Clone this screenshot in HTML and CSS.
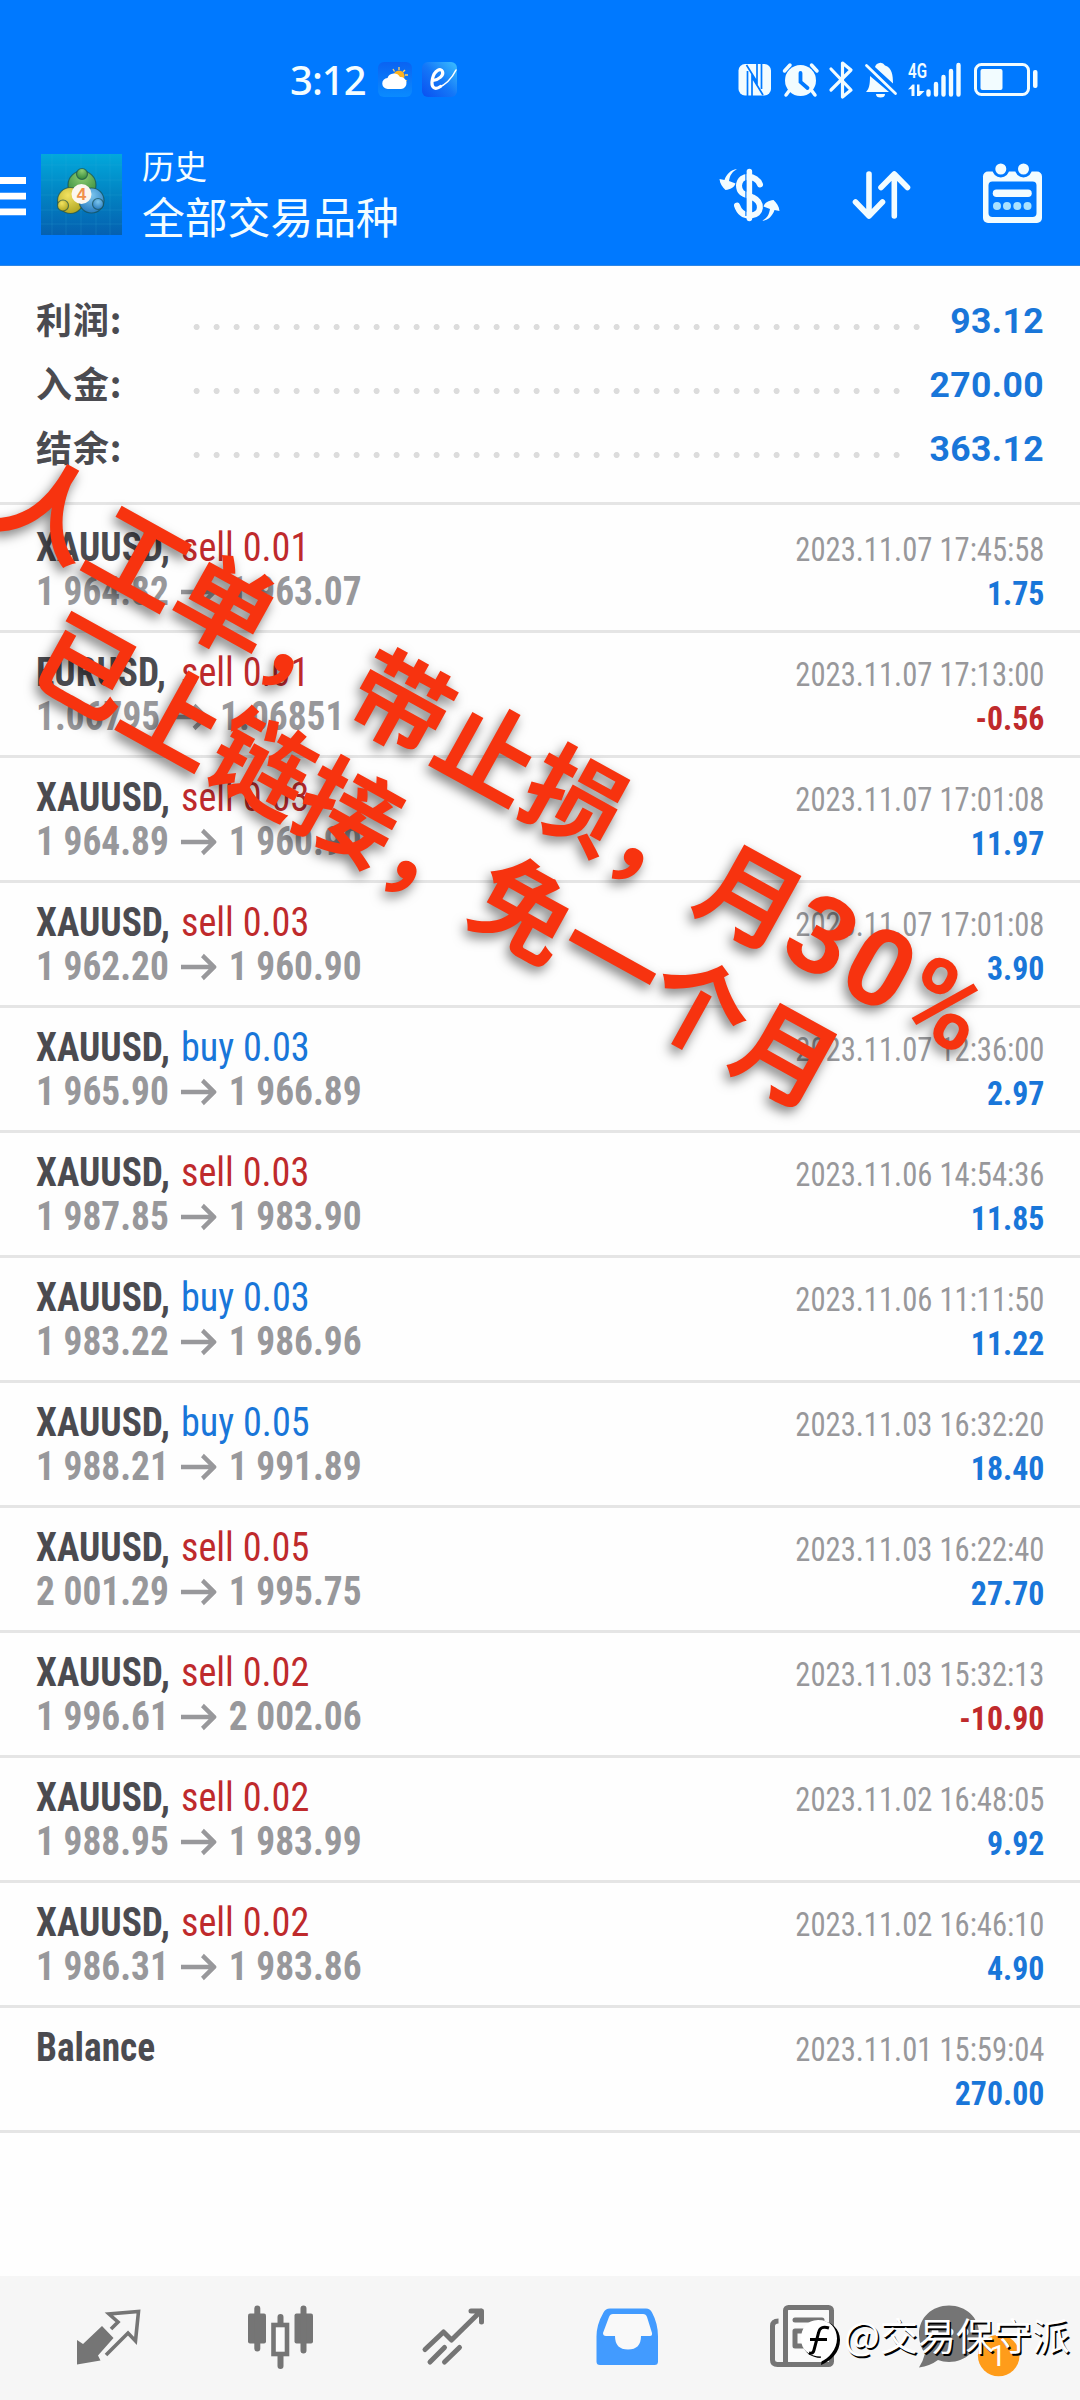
FILE: index.html
```html
<!DOCTYPE html>
<html lang="zh-CN">
<head>
<meta charset="utf-8">
<title>历史</title>
<link rel="stylesheet" href="styles.css">
</head>
<body>
<div class="screen">
  <header class="top">
    <div class="status">
      <span class="clock">3:12</span>
      <svg class="apps" viewBox="376 60 84 40" width="84" height="40">
        <defs>
          <linearGradient id="sky" x1="0" y1="0" x2="0" y2="1"><stop offset="0" stop-color="#0a63f2"/><stop offset="1" stop-color="#0a8bff"/></linearGradient>
          <linearGradient id="app" x1="1" y1="0" x2="0" y2="1"><stop offset="0" stop-color="#3cc0ff"/><stop offset=".5" stop-color="#1478f8"/><stop offset="1" stop-color="#0a50f0"/></linearGradient>
        </defs>
        <rect x="378" y="62" width="34" height="35" rx="6" fill="url(#sky)"/>
        <g stroke="#ffd262" stroke-width="1.3"><path d="M399 67v3M405 70l-2 2M408 75h-3M407 81l-3-1M393 69l1.500 2.500"/></g>
        <circle cx="399" cy="76" r="5.500" fill="#ffb21e"/>
        <path d="M388 89a5.500 5.500 0 0 1-.5-11 7 7 0 0 1 12.500-1 6 6 0 0 1 1 12z" fill="#fff"/>
        <rect x="422" y="62" width="35" height="35" rx="6" fill="url(#app)"/>
        <path d="M433 80.500c6-1 11-5 9.500-9s-8-1.500-10 7c-2 9 2 12 8 8" fill="none" stroke="#fff" stroke-width="3.200" stroke-linecap="round"/>
        <path d="M438 88c7-3 14-10 18-18" fill="none" stroke="#fff" stroke-width="1.600" stroke-linecap="round"/>
      </svg>
      <svg class="signals" viewBox="736 60 304 40" width="304" height="40" fill="#f2fcff">
        <rect x="738.500" y="64" width="32.500" height="31.500" rx="6.500"/>
        <path d="M747.500 97V71M752 97V77l11 18M761.500 63v26M757 63v19L746.500 65" stroke="#0079ff" stroke-width="1.700" fill="none"/>
        <circle cx="800.500" cy="80.500" r="15.500"/>
        <path d="M784.500 71l5.500-6M817 71l-5.500-6M789 91l-3 4M812 91l3 4" stroke="#f2fcff" stroke-width="3.500" stroke-linecap="round"/>
        <path d="M800.500 73v9l7 6" fill="none" stroke="#0079ff" stroke-width="3.800" stroke-linecap="round"/>
        <path d="M831 69l20 21-8.500 7V63l8.500 7-20 20" fill="none" stroke="#f2fcff" stroke-width="3.200" stroke-linejoin="round" stroke-linecap="round"/>
        <path d="M870 76l19 16h-23c3-3 4-7 4-16zM875 67a5.500 5.500 0 0 1 10-1.500c7 2 8 10 8 18z"/>
        <path d="M866.500 65.500l29 28" stroke="#f2fcff" stroke-width="2.800" stroke-linecap="round"/>
        <path d="M876 94h9a4.500 3.500 0 0 1-9 0z"/>
        <text x="908" y="78" textLength="19" lengthAdjust="spacingAndGlyphs" class="net">4G</text>
        <path d="M908 89.500l4.500-5h2V96h-3V89zM917 84.500h2.500V91h5l-5 5H917z"/>
        <path d="M928.500 91.500v3M936 84v10.500M943.500 77v17.500M951 71v23.500M958.500 65v29.500" stroke="#f2fcff" stroke-width="4.400" stroke-linecap="round"/>
        <rect x="975.500" y="64.500" width="53" height="30" rx="6" fill="none" stroke="#f2fcff" stroke-width="3"/>
        <rect x="980.500" y="69" width="22" height="21" rx="2"/>
        <rect x="1033" y="70" width="4.500" height="18" rx="2"/>
      </svg>
    </div>
    <div class="bar">
      <svg class="menu" viewBox="0 150 26 90" width="26" height="90"><path d="M0 180.500h26M0 196.200h26M0 211.800h26" stroke="#fff" stroke-width="6.800"/></svg>
      <svg class="logo" viewBox="41 154 81 81" width="81" height="81">
        <defs>
          <linearGradient id="lg" x1="0" y1="0" x2="0" y2="1"><stop offset="0" stop-color="#02a8dc"/><stop offset=".5" stop-color="#0283c2"/><stop offset="1" stop-color="#0560b0"/></linearGradient>
          <radialGradient id="gn" cx=".5" cy=".2" r=".9"><stop offset="0" stop-color="#8fce72"/><stop offset="1" stop-color="#237d33"/></radialGradient>
          <radialGradient id="yl" cx=".4" cy=".3" r=".8"><stop offset="0" stop-color="#f2e260"/><stop offset="1" stop-color="#a9a01c"/></radialGradient>
          <radialGradient id="bl" cx=".5" cy=".3" r=".8"><stop offset="0" stop-color="#7cc6ee"/><stop offset="1" stop-color="#1a6fb8"/></radialGradient>
        </defs>
        <rect x="41" y="154" width="81" height="81" fill="url(#lg)"/>
        <path d="M52 154v81M66 154v81M81 154v81M96 154v81M110 154v81M41 165h81M41 180h81M41 195h81M41 210h81M41 224h81" stroke="#3fb7e6" stroke-opacity=".18" stroke-width="1"/>
        <g stroke="#174c4a" stroke-opacity=".65" stroke-width="1.200">
          <circle cx="82" cy="185" r="14" fill="url(#gn)"/>
          <circle cx="70.500" cy="200.500" r="13" fill="url(#yl)"/>
          <circle cx="91.500" cy="200.500" r="12.500" fill="url(#bl)"/>
          <circle cx="82" cy="174" r="5.500" fill="url(#gn)"/>
          <circle cx="63" cy="205.500" r="5.500" fill="url(#yl)"/>
          <circle cx="98" cy="204" r="5.500" fill="url(#bl)"/>
        </g>
        <circle cx="81.500" cy="194" r="10" fill="#fbf7f0"/>
        <text x="81.500" y="200" text-anchor="middle" class="four">4</text>
      </svg>
      <div class="titles">
        <div class="title-small">历史</div>
        <div class="title-big">全部交易品种</div>
      </div>
      <svg class="tools" viewBox="710 150 340 90" width="340" height="90" fill="none" stroke="#f2fcff" stroke-linecap="round" stroke-linejoin="round">
        <path d="M760 184.500c-3-9-20-12-21 1 0 10 9 9 14 12 10 5 9 17-2 18-8 .500-12-4-14-10" stroke-width="6"/>
        <path d="M746 174v42" stroke="#0079ff" stroke-width="1.400" stroke-linecap="butt"/>
        <path d="M749.400 171.500v47" stroke-width="5.500"/>
        <g fill="#f2fcff" stroke="none">
          <path id="turn" d="M737 169c-5 3-7 6-8 12l6.500 2.500c-1.500 4-5 6-10 6.500-3-3-5.500-6-6-11l5 1c2-6 6-10 12.500-11z"/>
          <use href="#turn" transform="rotate(180 749.500 195)"/>
        </g>
        <path d="M869 174v42M855.500 202l13.500 14 13.500-14M894.300 216v-41.500M881 187.500l13.300-13.500 13.200 13.500" stroke-width="5.600"/>
        <rect x="983" y="171.500" width="59" height="51.500" rx="5" fill="#f2fcff" stroke="none"/>
        <rect x="988.500" y="181.500" width="48" height="35.500" rx="4" fill="#0079ff" stroke="none"/>
        <g fill="#f2fcff" stroke="#0079ff" stroke-width="3"><circle cx="1000.800" cy="169" r="7"/><circle cx="1023.500" cy="169" r="7"/></g>
        <path d="M996.500 193.300h31.500" stroke-width="7.500"/>
        <g fill="#a9e2ff" stroke="none"><circle cx="997" cy="206" r="4"/><circle cx="1007" cy="206" r="4"/><circle cx="1017.300" cy="206" r="4"/><circle cx="1027.500" cy="206" r="4"/></g>
      </svg>
    </div>
  </header>

  <section class="summary">
    <div class="sum"><span class="label">利润:</span><span class="dots"></span><span class="value">93.12</span></div>
    <div class="sum"><span class="label">入金:</span><span class="dots"></span><span class="value">270.00</span></div>
    <div class="sum"><span class="label">结余:</span><span class="dots"></span><span class="value">363.12</span></div>
  </section>

  <main class="list" id="list"></main>

  <nav class="tabs">
    <svg viewBox="20 2276 174 124" fill="#757575">
      <path d="M77 2340l6 4 19-18 11.500 12-15.500 17.500 2.500 5-23.500 4z"/>
      <path d="M111 2329l7-7-9-8 29.500-2.500-3 29.500-7.500-8-22 22" fill="none" stroke="#757575" stroke-width="3.600"/>
    </svg>
    <svg viewBox="194 2276 174 124" fill="#757575">
      <rect x="248" y="2313.500" width="18" height="30" rx="2"/><rect x="294.500" y="2313.500" width="18.500" height="30" rx="2"/>
      <path d="M257.300 2308.500v40M303.500 2308.500v42M280.500 2317v49" stroke="#757575" stroke-width="6" stroke-linecap="round"/>
      <rect x="273.500" y="2325" width="13.500" height="29" fill="#fafafa" stroke="#757575" stroke-width="4.600"/>
    </svg>
    <svg viewBox="368 2276 174 124" fill="none" stroke="#757575" stroke-width="5" stroke-linecap="round" stroke-linejoin="round">
      <path d="M425 2349.500l18.500-17.500 8 8 29.500-29M471 2311h10.500v11M430 2362l14.500-14.500M444.500 2362l15-14.500"/>
    </svg>
    <svg viewBox="542 2276 174 124">
      <path d="M610 2308.500h36q4 0 6 4 6 11 6 24v25q0 3.500-3.500 3.500h-54.500q-3.500 0-3.500-3.500v-25q0-12 7-24 2-4 6.500-4z" fill="#429bff"/>
      <path d="M613 2314h30q3 0 4 3l5 16q.5 3-2 3h-9q0 13.500-13 13.500t-13-13.500h-9q-3 0-3-3l6-16q1-3 4-3z" fill="#f9f9f9"/>
    </svg>
    <svg viewBox="716 2276 174 124" fill="none" stroke="#757575" stroke-width="5" stroke-linejoin="round">
      <rect x="785.500" y="2307.500" width="46" height="57" rx="3" fill="#fafafa"/>
      <path d="M778.500 2321q-6 0-6 5v34q0 4.500 5 4.500h14"/>
      <path d="M795 2320h27" stroke-linecap="round"/>
      <rect x="795" y="2331" width="16" height="15"/>
      <path d="M818 2331h5M818 2345h5"/>
    </svg>
    <svg viewBox="890 2276 174 124">
      <path d="M949 2305.500c17 0 30 12 30 28s-13 28.500-30 28.500q-6 0-11-2-8 6-19 7.500 4-6 6-14-6-8-6-19c0-17 13-29 30-29z" fill="#757575"/>
      <g fill="#f6f6f6"><circle cx="935" cy="2332" r="3.500"/><circle cx="950" cy="2332" r="3.500"/><circle cx="965" cy="2332" r="3.500"/></g>
      <circle cx="998.700" cy="2355.500" r="20.800" fill="#ff9c1a"/>
      <text x="998" y="2366" text-anchor="middle" class="count">1</text>
    </svg>
  </nav>

  <div class="stamp">人工单，带止损，月<span class="rate">30%</span><br>已上链接，免一个月</div>

  <div class="mark">
    <svg viewBox="800 2318 42 48" width="42" height="48">
      <path d="M820 2321c12 0 20 8 20 19 0 12-9 21-19 25l1-7c-13 0-20-8-20-18s7-19 18-19z" fill="#000"/>
      <path d="M818 2320c12 0 19 8 19 18.500 0 11-8 20-17 23.500l1-5.500c-12 0-20-7-20-17.500s6-19 17-19z" fill="#fff"/>
      <path d="M829 2328q-9-3-10.500 5l-4.500 17q-1 4-5 3M810 2339.500h17" fill="none" stroke="#000" stroke-width="3"/>
    </svg>
    <span class="handle">@交易保守派</span>
  </div>
</div>
<script src="app.js"></script>
</body>
</html>
```
FILE: styles.css
```css
* { box-sizing: border-box; }
body { margin: 0; background: #fff; font-family: Roboto, "Noto Sans CJK SC", sans-serif; }
.screen { position: relative; width: 1080px; height: 2400px; overflow: hidden; display: flex; flex-direction: column; background: #fefefe; }

.top { height: 266px; background: #0079ff; color: #f4fdff; border-bottom: 1px solid #2d86e6; flex: none; }
.status { height: 150px; padding: 60px 40px 0 290px; display: flex; align-items: flex-start; }
.clock { width: 86px; height: 40px; font: 500 40px/40px "Noto Sans", sans-serif; letter-spacing: -1px; white-space: nowrap; }
.signals { margin-left: auto; }
.apps, .signals, .menu, .logo, .tools { display: block; flex: none; }
.net { font: 600 20px Roboto, sans-serif; }
.four { font: bold 17px "Liberation Sans", sans-serif; fill: #f0914a; }
.bar { display: flex; height: 90px; padding-right: 30px; }
.logo { margin: 4px 20px 0 15px; }
.titles { flex: 1; margin-top: -2px; font-family: "Noto Sans CJK SC", sans-serif; white-space: nowrap; }
.title-small { font-size: 32.5px; line-height: 34px; height: 44px; }
.title-big { font-size: 42.8px; line-height: 46px; }

.summary { height: 239px; padding: 22px 36px 0 36px; border-bottom: 3px solid #e5e5e5; flex: none; }
.sum { height: 64px; display: flex; align-items: center; }
.label { width: 151px; margin-top: -4px; font: 700 36px/60px "Noto Sans CJK SC", sans-serif; letter-spacing: .9px; color: #4b4b50; }
.dots { flex: 1; height: 6px; margin: 14px 23px 0 0; background: radial-gradient(circle at 9.6px 3px, #dcdcdc 2.6px, transparent 3.4px) 0 0 / 20px 6px repeat-x; }
.value { font-weight: 700; font-size: 35.5px; letter-spacing: .4px; color: #1976d9; padding-top: 1px; }

.list { flex: 1; }
.row { height: 125px; border-bottom: 3px solid #e5e5e5; padding: 18px 36px 0; display: flex; justify-content: space-between; white-space: nowrap; font-family: "Roboto Condensed", Roboto, sans-serif; font-stretch: 75%; }
.row:first-child { height: 128px; padding-top: 21px; }
.line { height: 44px; line-height: 44px; font-size: 40px; display: flex; }
.symbol { font-weight: 700; color: #4b4b50; width: 145px; transform: scaleX(.935); transform-origin: left; }
.side { font-weight: 400; transform: scaleX(.955); transform-origin: left; }
.price { color: #98989b; font-weight: 700; transform: scaleX(.935); transform-origin: left; }
.price svg { margin: 0 13px 0 13px; }
.right { padding-top: 2px; text-align: right; line-height: 44px; }
.date { font-size: 33px; color: #98989b; transform: scaleX(.928); transform-origin: right; }
.profit { font-size: 33px; font-weight: 700; transform: scaleX(.965); transform-origin: right; }
.buy, .gain { color: #1976d9; }
.sell, .loss { color: #bf2a2c; }

.tabs { height: 124px; flex: none; background: #f6f6f6; padding-left: 20px; display: flex; }
.tabs svg { width: 174px; height: 124px; flex: none; }
.count { font: 400 30px Roboto, sans-serif; fill: #fff; }

.stamp { position: absolute; left: -131px; top: 682px; width: 1200px; text-align: center; white-space: nowrap; font: 700 100px/121px "Noto Sans CJK SC", sans-serif; color: #f7330f; transform: rotate(29deg); text-shadow: 0 6px 12px rgba(0, 0, 0, .5); }
.rate { font-family: Roboto, sans-serif; font-size: 108px; line-height: 100px; letter-spacing: 4px; }
.mark { position: absolute; left: 800px; top: 2318px; display: flex; height: 48px; }
.handle { margin: -5px 0 0 2px; font: 400 38px/42px "Noto Sans CJK SC", sans-serif; color: #fff; text-shadow: 1.5px 1.5px 0 #000; white-space: nowrap; }
```
FILE: app.js
```js
const trades = [
  ["XAUUSD,", "sell 0.01", "1 964.82", "1 963.07", "2023.11.07 17:45:58", "1.75"],
  ["EURUSD,", "sell 0.01", "1.06795", "1.06851", "2023.11.07 17:13:00", "-0.56"],
  ["XAUUSD,", "sell 0.03", "1 964.89", "1 960.90", "2023.11.07 17:01:08", "11.97"],
  ["XAUUSD,", "sell 0.03", "1 962.20", "1 960.90", "2023.11.07 17:01:08", "3.90"],
  ["XAUUSD,", "buy 0.03", "1 965.90", "1 966.89", "2023.11.07 12:36:00", "2.97"],
  ["XAUUSD,", "sell 0.03", "1 987.85", "1 983.90", "2023.11.06 14:54:36", "11.85"],
  ["XAUUSD,", "buy 0.03", "1 983.22", "1 986.96", "2023.11.06 11:11:50", "11.22"],
  ["XAUUSD,", "buy 0.05", "1 988.21", "1 991.89", "2023.11.03 16:32:20", "18.40"],
  ["XAUUSD,", "sell 0.05", "2 001.29", "1 995.75", "2023.11.03 16:22:40", "27.70"],
  ["XAUUSD,", "sell 0.02", "1 996.61", "2 002.06", "2023.11.03 15:32:13", "-10.90"],
  ["XAUUSD,", "sell 0.02", "1 988.95", "1 983.99", "2023.11.02 16:48:05", "9.92"],
  ["XAUUSD,", "sell 0.02", "1 986.31", "1 983.86", "2023.11.02 16:46:10", "4.90"],
  ["Balance", "", "", "", "2023.11.01 15:59:04", "270.00"]
];
const arrow = '<svg width="38" height="44" viewBox="0 0 38 44" fill="none" stroke="#98989b" stroke-width="4.500"><path d="M0 22h35M23 10.500l12.500 11.500-12.500 11.500"/></svg>';
document.getElementById("list").innerHTML = trades.map(([symbol, side, open, close, date, profit]) => `
  <div class="row">
    <div class="left">
      <div class="line"><span class="symbol">${symbol}</span><span class="side ${side.split(" ")[0]}">${side}</span></div>
      <div class="line price">${open ? `<span>${open}</span>${arrow}<span>${close}</span>` : ""}</div>
    </div>
    <div class="right">
      <div class="date">${date}</div>
      <div class="profit ${profit[0] === "-" ? "loss" : "gain"}">${profit}</div>
    </div>
  </div>`).join("");
```
